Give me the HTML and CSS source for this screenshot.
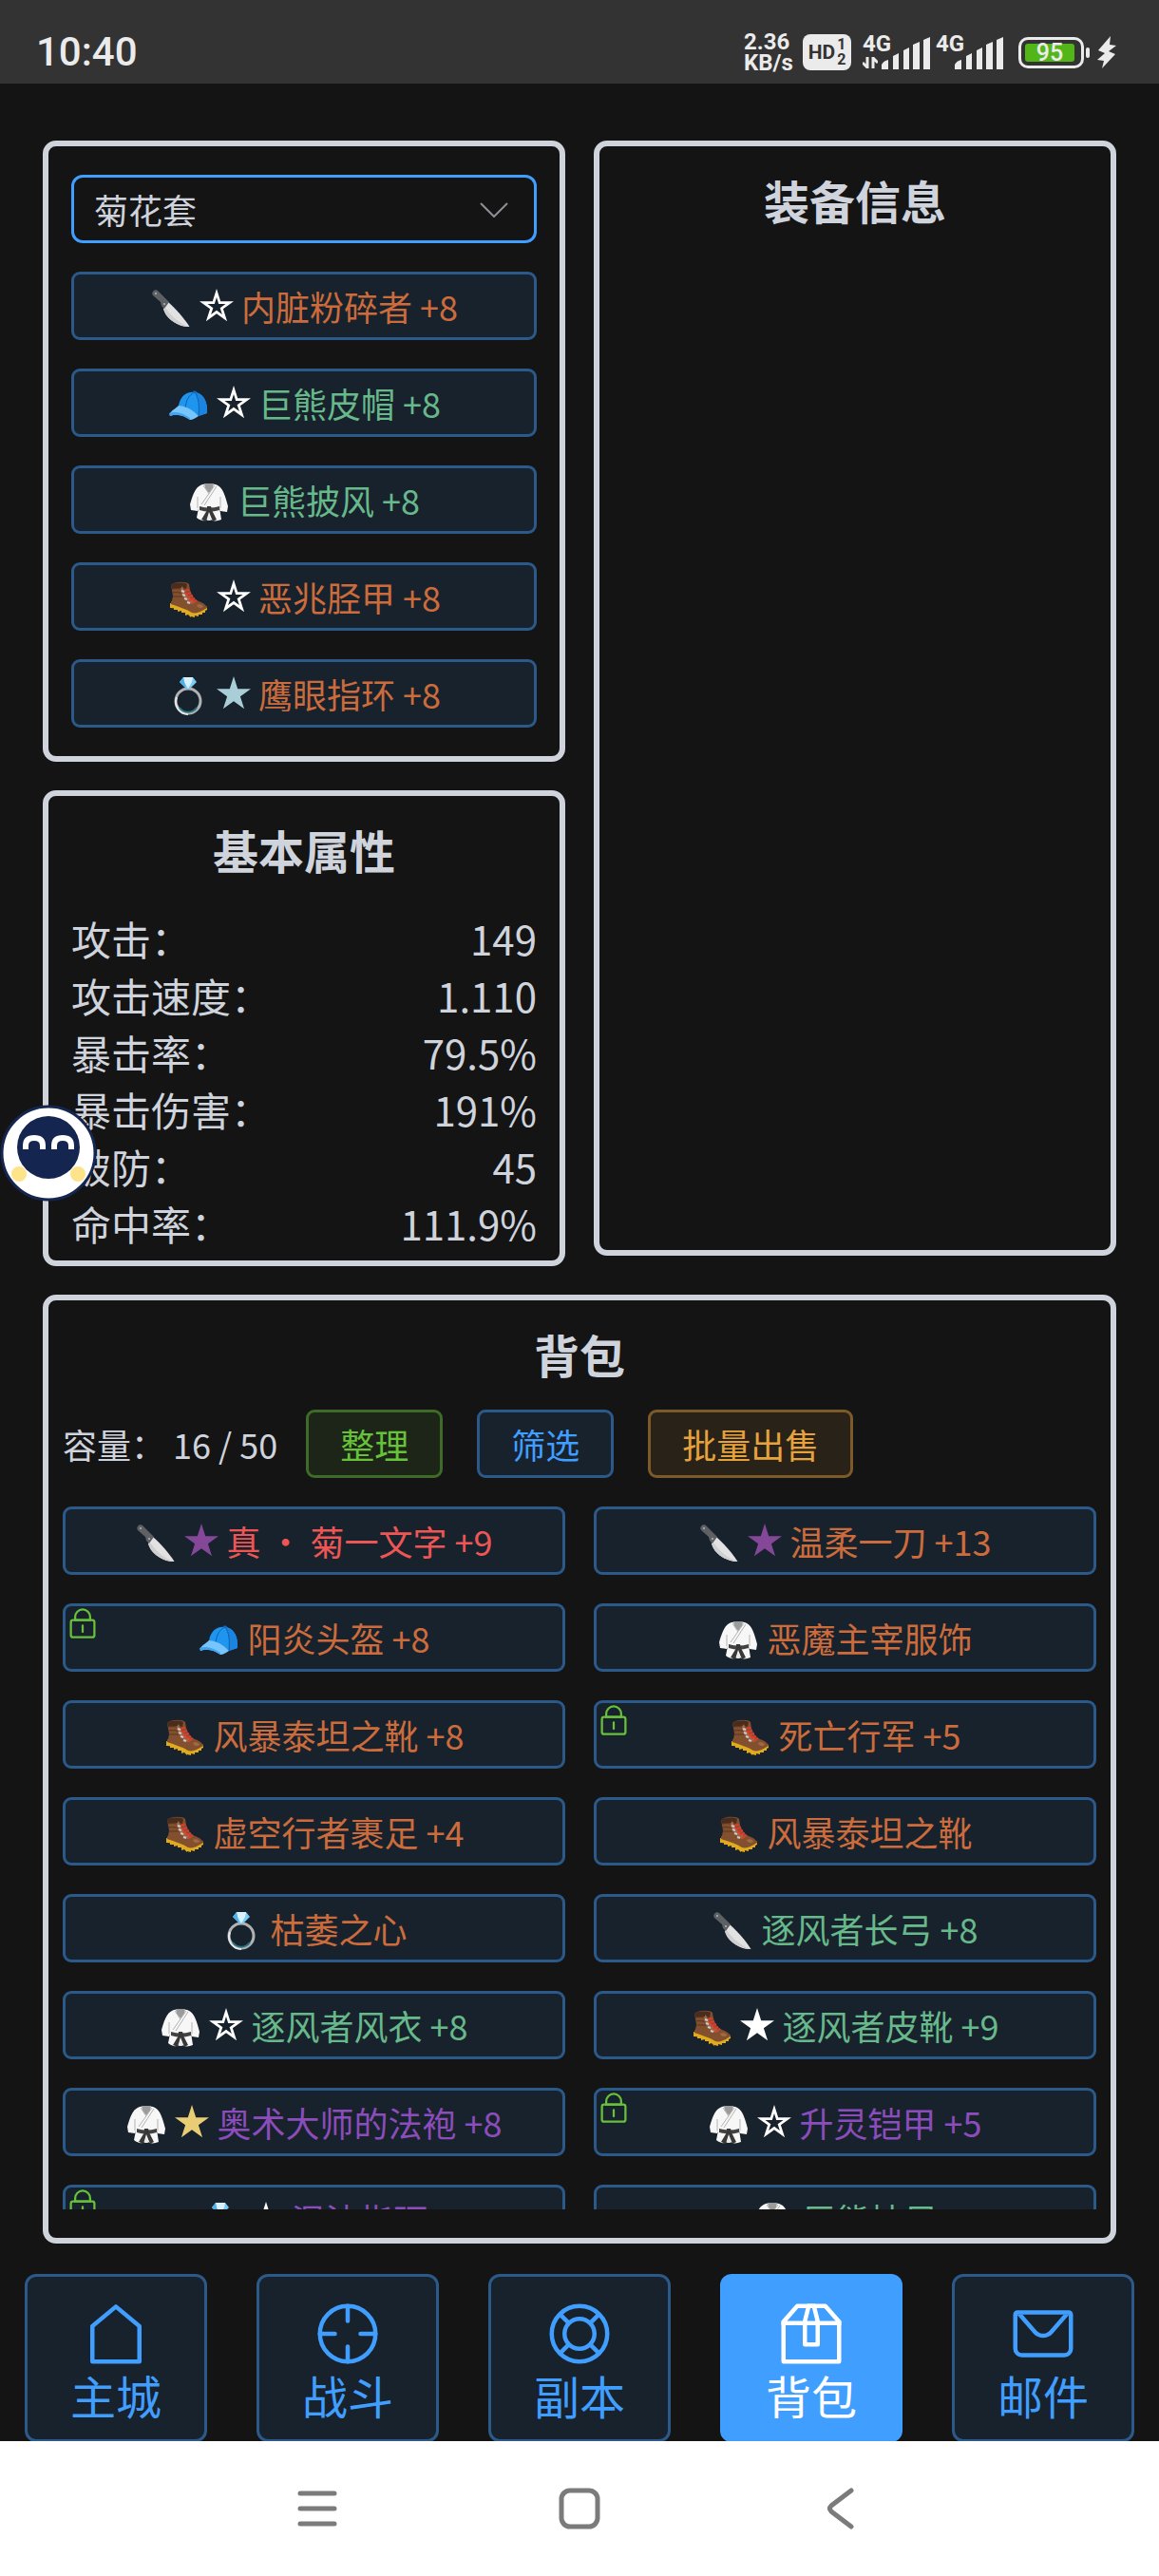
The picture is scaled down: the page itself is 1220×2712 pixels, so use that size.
FILE: index.html
```html
<!DOCTYPE html>
<html lang="zh-CN">
<head>
    <meta charset="utf-8">
    <meta name="viewport" content="width=device-width">
    <title>背包</title>
    <link rel="stylesheet" href="styles.css">
</head>
<body>
    <!-- shared icons -->
    <svg class="sprite" aria-hidden="true">
        <symbol id="knife" viewBox="0 0 40 40">
            <path d="M12 20 L17 13 C25 20 34 30 39.500 39 C31 40 17 33 13 23 Z" fill="#e2e2e2"/>
            <path d="M12 20 L15 20 C20 28 30 36 39 39 C29 39 17 32 13 23 Z" fill="#cfcfcf"/>
            <path d="M1 2 C2 0 5 0 6 1 L18 13 L13 20 L10 17 L9 13 L1 6 C0 5 0 3 1 2 Z" fill="#5d6164"/>
            <circle cx="4" cy="4" r="1" fill="#b5b8ba"/>
            <circle cx="13" cy="15" r="1" fill="#b5b8ba"/>
        </symbol>
        <symbol id="cap" viewBox="0 0 40 40">
            <path d="M10 20 C12 9 20 5 27 6 C36 7 41 16 40 28 L31 31 C24 24 17 22 10 20 Z" fill="#1e96f0"/>
            <path d="M27 6 C36 7 41 16 40 28 L31 31 C32 20 31 11 27 6 Z" fill="#1a84e0"/>
            <path d="M27 6 C20 9 18 15 17 23 M27 6 C31 11 32 20 31 31" fill="none" stroke="#0b60b0" stroke-width="1"/>
            <path d="M10 20 C17 20 26 25 31 31 C28 33 25 35 22 35 C16 31 9 28 1 31 C-1 27 6 24 10 20 Z" fill="#78c5fb"/>
            <path d="M0 28 C9 25 17 30 22 33 L22 35 C16 31 9 28 1 31 Z" fill="#3fa4f2"/>
            <path d="M25 5 C27 4 29 5 29 6 L26 7 Z" fill="#0f6cc0"/>
        </symbol>
        <symbol id="gi" viewBox="0 0 40 40">
            <path d="M13 1 C17 0 23 0 27 1 C33 3 36 8 40 24 L39 30 L32 29 L31 25 L33 38 C28 40 24 40 20 37 C16 40 12 40 7 36 L9 26 L8 29 L1 28 L0 22 C4 8 7 3 13 1 Z" fill="#f7f7f7"/>
            <path d="M15 0 H25 L24 5 L20 10 L16 5 Z" fill="#9b9b9b"/>
            <path d="M8 14 V26 M32 14 V26 M14 2 L20 11 M26 2 L12 22 M28 3 L15 23" fill="none" stroke="#b3b3b3" stroke-width="1"/>
            <path d="M10 24 C17 26 24 26 31 24 V28 C24 30 17 30 10 28 Z" fill="#424242"/>
            <path d="M18 24 H22 L23 28 L28 38 L24 40 L20 30 L17 40 L12 38 L18 28 Z" fill="#383838"/>
            <path d="M20 32 L22 39 H18 Z" fill="#e8e8e8"/>
        </symbol>
        <symbol id="boot" viewBox="0 0 40 40">
            <path d="M2 5 C6 1 18 1 21 4 C22 12 24 18 31 22 C37 24 40 27 40 30 L30 36 L2 29 C2 23 4 19 4 16 Z" fill="#83502f"/>
            <path d="M2 5 C5 2 15 2 19 4 L18 9 C12 7 6 9 3 9 Z" fill="#4a2c1c"/>
            <path d="M3 9 C8 8 13 9 17 10 M3 13 C8 12 12 13 15 14 M4 17 L14 17" fill="none" stroke="#5a3420" stroke-width="1"/>
            <path d="M14 6 C16 13 21 19 28 23 L24 25 C17 22 13 15 12 9 Z" fill="#a26a43"/>
            <path d="M16 11 L21 10 M17 15 L23 13 M19 18 L25 16 M21 21 L27 19 M24 24 L29 21" stroke="#e03a30" stroke-width="2"/>
            <path d="M13 11 L16 12 M14 15 L17 16 M16 19 L19 20 M19 23 L22 24" stroke="#c8ccd0" stroke-width="2"/>
            <path d="M1 24 C10 27 18 29 24 33 C30 35 36 30 40 28 L40 31 L38 32 V34 L35 34 V36 L31 36 V38 L27 37 V39 L23 38 V39 L20 36 L17 37 V34 L13 34 V32 L9 33 V31 L5 31 V29 L1 29 Z" fill="#e0ab1c"/>
            <path d="M2 22 C10 24 18 26 24 30 C30 32 36 28 40 27 L40 29 C36 31 30 36 24 34 C18 30 10 28 2 25 Z" fill="#83502f"/>
            <path d="M29 26 C32 24 36 26 36 28 C33 30 30 29 29 26 Z" fill="#a26a43"/>
        </symbol>
        <symbol id="ring" viewBox="0 0 40 40">
            <circle cx="20" cy="25" r="13" fill="none" stroke="#aeb2b5" stroke-width="3"/>
            <path d="M8 21 A13 13 0 0 0 20 39" fill="none" stroke="#e4e7e9" stroke-width="2"/>
            <path d="M11 32 A11 11 0 0 0 29 32" fill="none" stroke="#2d7280" stroke-width="2"/>
            <path d="M15 0 H25 L29 5 L22 12 H18 L11 5 Z" fill="#7ccbf5"/>
            <path d="M15 0 H25 L24 5 H16 Z M16 5 L20 12 L24 5 Z" fill="#d8f3ff"/>
            <path d="M11 5 L15 0 L16 5 L18 12 Z" fill="#4fb0ea"/>
        </symbol>
        <symbol id="star" viewBox="0 0 36 36">
            <path d="M18 0 L22.200 13.200 H36 L24.900 21.200 L29.100 34.300 L18 26.200 L6.900 34.300 L11.100 21.200 L0 13.200 H13.800 Z" fill="currentColor"/>
        </symbol>
        <symbol id="star-o" viewBox="0 0 36 36">
            <path fill-rule="evenodd" d="M18 0 L22.200 13.200 H36 L24.900 21.200 L29.100 34.300 L18 26.200 L6.900 34.300 L11.100 21.200 L0 13.200 H13.800 Z M18 9 L15.800 15.900 H8.500 L14.400 20.200 L12.100 27.100 L18 22.800 L23.900 27.100 L21.600 20.200 L27.500 15.900 H20.200 Z" fill="currentColor"/>
        </symbol>
        <symbol id="lock" viewBox="0 0 1024 1024">
            <path fill="currentColor" d="M224 448a32 32 0 0 0-32 32v384a32 32 0 0 0 32 32h576a32 32 0 0 0 32-32V480a32 32 0 0 0-32-32H224zm0-64h576a96 96 0 0 1 96 96v384a96 96 0 0 1-96 96H224a96 96 0 0 1-96-96V480a96 96 0 0 1 96-96z"/>
            <path fill="currentColor" d="M512 544a32 32 0 0 1 32 32v192a32 32 0 1 1-64 0V576a32 32 0 0 1 32-32zm192-160v-64a192 192 0 1 0-384 0v64h384zM512 64a256 256 0 0 1 256 256v128H256V320A256 256 0 0 1 512 64z"/>
        </symbol>
        <symbol id="bars" viewBox="0 0 52 34">
            <path fill="#ebebeb" d="M0 34 V29 Q2 25 7 24 V34 Z M12 34 V20 L18 17 V34 Z M23 34 V14 L29 11 V34 Z M33 34 V8 L40 5 V34 Z M44 34 V3 L51 0 V34 Z"/>
        </symbol>
    </svg>

    <header class="status-bar">
        <span class="clock">10:40</span>
        <div class="status-icons">
            <span class="speed">2.36<br>KB/s</span>
            <span class="hd">HD<span class="hd-num">1<br>2</span></span>
            <span class="signal">
                <span class="net">4G</span>
                <svg class="arrows" viewBox="0 0 16 12"><path d="M5 0 V11 L0 6 M11 12 V1 L16 6" fill="none" stroke="#ebebeb" stroke-width="3"/></svg>
                <svg class="bars"><use href="#bars"/></svg>
            </span>
            <span class="signal second">
                <span class="net">4G</span>
                <svg class="bars"><use href="#bars"/></svg>
            </span>
            <span class="battery"><span class="level">95</span></span>
            <svg class="bolt" viewBox="0 0 20 34"><path d="M14 0 L1 15 L8 18 L0 25 L7 26 L5 34 L19 19 L12 16 L20 10 L13 9 Z" fill="#ebebeb"/></svg>
        </div>
    </header>

    <main class="content">
        <div class="top">
            <div class="left">
                <section class="panel equip">
                    <div class="select">
                        <select aria-label="套装">
                            <option>菊花套</option>
                        </select>
                        <svg viewBox="0 0 30 16"><path d="M1 1 L15 15 L29 1" fill="none" stroke="#8d9095" stroke-width="2"/></svg>
                    </div>
                    <button class="item orange"><svg class="emoji"><use href="#knife"/></svg><svg class="star white"><use href="#star-o"/></svg><span>内脏粉碎者 +8</span></button>
                    <button class="item green"><svg class="emoji"><use href="#cap"/></svg><svg class="star white"><use href="#star-o"/></svg><span>巨熊皮帽 +8</span></button>
                    <button class="item green"><svg class="emoji"><use href="#gi"/></svg><span>巨熊披风 +8</span></button>
                    <button class="item orange"><svg class="emoji"><use href="#boot"/></svg><svg class="star white"><use href="#star-o"/></svg><span>恶兆胫甲 +8</span></button>
                    <button class="item orange"><svg class="emoji"><use href="#ring"/></svg><svg class="star ice"><use href="#star"/></svg><span>鹰眼指环 +8</span></button>
                </section>

                <section class="panel stats">
                    <h3>基本属性</h3>
                    <dl>
                        <div><dt>攻击：</dt><dd>149</dd></div>
                        <div><dt>攻击速度：</dt><dd>1.110</dd></div>
                        <div><dt>暴击率：</dt><dd>79.5%</dd></div>
                        <div><dt>暴击伤害：</dt><dd>191%</dd></div>
                        <div><dt>破防：</dt><dd>45</dd></div>
                        <div><dt>命中率：</dt><dd>111.9%</dd></div>
                    </dl>
                    <!-- floating helper -->
                    <button class="helper" aria-label="助手">
                        <svg viewBox="0 0 102 102">
                            <circle cx="51" cy="51" r="49" fill="#fff" stroke="#14264f" stroke-width="3"/>
                            <circle cx="51" cy="45" r="33" fill="#14264f"/>
                            <path d="M27 47 V43 Q27 35 36 35 Q45 35 45 43 V47 M57 47 V43 Q57 35 66 35 Q75 35 75 43 V47" fill="none" stroke="#fff" stroke-width="6"/>
                            <circle cx="20" cy="73" r="8" fill="#fde38a"/>
                            <circle cx="82" cy="73" r="8" fill="#fde38a"/>
                        </svg>
                    </button>
                </section>
            </div>

            <section class="panel info">
                <h3>装备信息</h3>
            </section>
        </div>

        <section class="panel bag">
            <h3>背包</h3>
            <div class="tools">
                <span class="capacity">容量： 16 / 50</span>
                <button class="tool success">整理</button>
                <button class="tool primary">筛选</button>
                <button class="tool warning">批量出售</button>
            </div>
            <div class="bag-list">
                <button class="item red"><svg class="emoji"><use href="#knife"/></svg><svg class="star violet"><use href="#star"/></svg><span>真 ・ 菊一文字 +9</span></button>
                <button class="item orange"><svg class="emoji"><use href="#knife"/></svg><svg class="star violet"><use href="#star"/></svg><span>温柔一刀 +13</span></button>
                <button class="item orange"><svg class="lock"><use href="#lock"/></svg><svg class="emoji"><use href="#cap"/></svg><span>阳炎头盔 +8</span></button>
                <button class="item orange"><svg class="emoji"><use href="#gi"/></svg><span>恶魔主宰服饰</span></button>
                <button class="item orange"><svg class="emoji"><use href="#boot"/></svg><span>风暴泰坦之靴 +8</span></button>
                <button class="item orange"><svg class="lock"><use href="#lock"/></svg><svg class="emoji"><use href="#boot"/></svg><span>死亡行军 +5</span></button>
                <button class="item orange"><svg class="emoji"><use href="#boot"/></svg><span>虚空行者裹足 +4</span></button>
                <button class="item orange"><svg class="emoji"><use href="#boot"/></svg><span>风暴泰坦之靴</span></button>
                <button class="item orange"><svg class="emoji"><use href="#ring"/></svg><span>枯萎之心</span></button>
                <button class="item green"><svg class="emoji"><use href="#knife"/></svg><span>逐风者长弓 +8</span></button>
                <button class="item green"><svg class="emoji"><use href="#gi"/></svg><svg class="star white"><use href="#star-o"/></svg><span>逐风者风衣 +8</span></button>
                <button class="item green"><svg class="emoji"><use href="#boot"/></svg><svg class="star white"><use href="#star"/></svg><span>逐风者皮靴 +9</span></button>
                <button class="item purple"><svg class="emoji"><use href="#gi"/></svg><svg class="star gold"><use href="#star"/></svg><span>奥术大师的法袍 +8</span></button>
                <button class="item purple"><svg class="lock"><use href="#lock"/></svg><svg class="emoji"><use href="#gi"/></svg><svg class="star white"><use href="#star-o"/></svg><span>升灵铠甲 +5</span></button>
                <button class="item purple"><svg class="lock"><use href="#lock"/></svg><svg class="emoji"><use href="#ring"/></svg><svg class="star white"><use href="#star-o"/></svg><span>混沌指环</span></button>
                <button class="item green"><svg class="emoji"><use href="#gi"/></svg><span>巨熊披风</span></button>
            </div>
        </section>
    </main>

    <nav class="tabs">
        <button class="tab">
            <svg viewBox="0 0 1024 1024"><path fill="currentColor" d="M192 413.952V896h640V413.952L512 147.328 192 413.952zM139.520 374.400l352-293.312a32 32 0 0 1 40.960 0l352 293.312A32 32 0 0 1 896 398.976V928a32 32 0 0 1-32 32H160a32 32 0 0 1-32-32V398.976a32 32 0 0 1 11.520-24.576z"/></svg>
            <span>主城</span>
        </button>
        <button class="tab">
            <svg viewBox="0 0 1024 1024"><g fill="none" stroke="currentColor" stroke-width="64" stroke-linecap="round"><circle cx="512" cy="512" r="416"/><path d="M512 96V320M512 704V928M96 512H320M704 512H928"/></g></svg>
            <span>战斗</span>
        </button>
        <button class="tab">
            <svg viewBox="0 0 1024 1024"><g fill="none" stroke="currentColor" stroke-width="64"><circle cx="512" cy="512" r="416"/><circle cx="512" cy="512" r="224"/><path d="M218 218L354 354M806 218L670 354M218 806L354 670M806 806L670 670"/></g></svg>
            <span>副本</span>
        </button>
        <button class="tab active">
            <svg viewBox="0 0 1024 1024"><path fill="currentColor" d="M317.056 128 128 344.064V896h768V344.064L706.944 128H317.056zm-14.528-64h418.944a32 32 0 0 1 24.064 10.880l206.528 236.096A32 32 0 0 1 960 332.032V928a32 32 0 0 1-32 32H96a32 32 0 0 1-32-32V332.032a32 32 0 0 1 7.936-21.120L278.400 75.008A32 32 0 0 1 302.528 64z"/><path fill="currentColor" d="M64 320h896v64H64z"/><path fill="currentColor" d="M448 327.872V640h128V327.872L526.080 128h-28.160L448 327.872zM448 64h128l64 256v352a32 32 0 0 1-32 32H416a32 32 0 0 1-32-32V320l64-256z"/></svg>
            <span>背包</span>
        </button>
        <button class="tab">
            <svg viewBox="0 0 1024 1024"><path fill="currentColor" d="M128 224v512a64 64 0 0 0 64 64h640a64 64 0 0 0 64-64V224H128zm0-64h768a64 64 0 0 1 64 64v512a128 128 0 0 1-128 128H192A128 128 0 0 1 64 736V224a64 64 0 0 1 64-64z"/><path fill="currentColor" d="M904 224 656.512 506.880a192 192 0 0 1-289.024 0L120 224h784zm-698.944 0 210.560 240.704a128 128 0 0 0 192.704 0L818.944 224H205.056z"/></svg>
            <span>邮件</span>
        </button>
    </nav>

    <footer class="system-bar">
        <button aria-label="最近任务"><svg viewBox="0 0 44 44"><path d="M4 6 H40 M4 22 H40 M4 38 H40" stroke="#7b7b7b" stroke-width="5" stroke-linecap="round"/></svg></button>
        <button aria-label="主屏幕"><svg viewBox="0 0 44 44"><rect x="3" y="3" width="38" height="38" rx="9" fill="none" stroke="#7b7b7b" stroke-width="5"/></svg></button>
        <button aria-label="返回"><svg viewBox="0 0 44 44"><path d="M32 3 L11 19 Q8 22 11 25 L32 41" fill="none" stroke="#7b7b7b" stroke-width="5" stroke-linecap="round"/></svg></button>
    </footer>
</body>
</html>
```

FILE: styles.css
```css
* {
    box-sizing: border-box;
}

body {
    margin: 0;
    height: 100vh;
    display: flex;
    flex-direction: column;
    background-color: #141414;
    color: #cfd3dc;
    font-family: "Noto Sans CJK SC", "Noto Sans", sans-serif;
    font-size: 36px;
}

button, select {
    margin: 0;
    padding: 0;
    font: inherit;
    color: inherit;
    background: none;
    border: none;
}

.sprite {
    position: absolute;
    width: 0;
    height: 0;
}

/* phone status bar */
.status-bar {
    flex: none;
    height: 88px;
    padding: 22px 45px 0 38px;
    display: flex;
    justify-content: space-between;
    background-color: #333;
    color: #ebebeb;
    font-family: Roboto, sans-serif;
}

.clock {
    font-size: 42px;
    line-height: 66px;
    font-weight: 500;
}

.status-icons {
    display: flex;
    align-items: center;
    height: 66px;
    font-weight: 700;
}

.speed {
    width: 54px;
    margin-right: 8px;
    font-size: 24px;
    line-height: 22px;
    white-space: nowrap;
}

.hd {
    display: flex;
    align-items: center;
    justify-content: center;
    gap: 2px;
    width: 51px;
    height: 38px;
    margin-right: 12px;
    border-radius: 8px;
    background-color: #ebebeb;
    color: #333;
    font-size: 21px;
}

.hd-num {
    font-size: 16px;
    line-height: 16px;
}

.signal {
    position: relative;
    width: 72px;
    height: 36px;
    margin-right: 5px;
    font-size: 24px;
    line-height: 18px;
}

.net {
    position: absolute;
    left: 0;
    top: 0;
}

.arrows {
    position: absolute;
    left: 0;
    bottom: 1px;
    width: 16px;
    height: 12px;
}

.bars {
    position: absolute;
    right: 0;
    bottom: 0;
    width: 52px;
    height: 34px;
}

.second {
    margin-right: 15px;
}

.battery {
    position: relative;
    width: 69px;
    height: 33px;
    padding: 4px;
    margin-right: 14px;
    border: 3px solid #ebebeb;
    border-radius: 10px;
}

.battery::after {
    content: "";
    position: absolute;
    right: -9px;
    top: 8px;
    width: 4px;
    height: 11px;
    border-radius: 2px;
    background-color: #ebebeb;
}

.level {
    display: block;
    width: 52px;
    height: 19px;
    border-radius: 3px;
    background-color: #52b518;
    font-size: 25px;
    font-weight: 500;
    line-height: 20px;
    text-align: center;
}

.bolt {
    width: 20px;
    height: 34px;
}

/* panels */
.content {
    flex: 1;
    min-height: 0;
    padding: 60px 45px 0;
    display: flex;
    flex-direction: column;
    gap: 30px;
}

.top {
    flex: none;
    display: grid;
    grid-template-columns: 1fr 1fr;
    gap: 30px;
}

.left {
    display: flex;
    flex-direction: column;
    gap: 30px;
}

.panel {
    position: relative;
    border: 6px solid #cfd3dc;
    border-radius: 14px;
    padding: 30px 24px;
}

.panel h3 {
    margin: 0;
    font-size: 48px;
    line-height: 52px;
    text-align: center;
}

.equip {
    display: flex;
    flex-direction: column;
    gap: 30px;
}

.info {
    margin-bottom: 11px;
}

.select {
    position: relative;
}

.select select {
    display: block;
    width: 100%;
    height: 72px;
    padding: 0 21px;
    border: 3px solid #409eff;
    border-radius: 12px;
    appearance: none;
}

.select svg {
    position: absolute;
    right: 30px;
    top: 29px;
    width: 30px;
    height: 16px;
    pointer-events: none;
}

/* equipment buttons */
.item {
    position: relative;
    display: flex;
    align-items: center;
    justify-content: center;
    gap: 8px;
    height: 72px;
    border: 3px solid #2a598a;
    border-radius: 9px;
    background-color: #18222c;
    line-height: 48px;
    white-space: nowrap;
}

.emoji {
    flex: none;
    width: 40px;
    height: 40px;
    margin: 6px 2px 0;
}

.star {
    flex: none;
    width: 36px;
    height: 36px;
}

.lock {
    position: absolute;
    left: 0;
    top: 0;
    width: 36px;
    height: 36px;
    color: #67c23a;
}

.orange { color: #cc6c3c; }
.green { color: #67b98b; }
.purple { color: #8b4dbb; }
.red { color: #ee5656; }

.white { color: #fff; }
.ice { color: #a9ced8; }
.violet { color: #854798; }
.gold { color: #e9cd74; }

/* stats */
.stats {
    padding-bottom: 9px;
}

.stats dl {
    margin: 38px 0 0;
    font-size: 42px;
    line-height: 60px;
}

.stats dl div {
    display: flex;
    justify-content: space-between;
}

.stats dd {
    margin: 0;
}

.helper {
    position: absolute;
    left: -51px;
    top: 325px;
    width: 102px;
    height: 102px;
}

.helper svg {
    display: block;
}

/* bag */
.bag {
    flex: 1;
    min-height: 0;
    padding: 30px 15px;
    display: flex;
    flex-direction: column;
}

.tools {
    display: flex;
    align-items: center;
    margin: 33px 0 30px;
}

.capacity {
    margin-right: 30px;
}

.tool {
    height: 72px;
    padding: 0 33px;
    margin-right: 36px;
    border: 3px solid;
    border-radius: 9px;
}

.success {
    color: #67c23a;
    background-color: #1c2518;
    border-color: #3e6b27;
}

.primary {
    color: #409eff;
    background-color: #18222c;
    border-color: #2a598a;
}

.warning {
    color: #e6a23c;
    background-color: #292218;
    border-color: #7d5b28;
}

.bag-list {
    flex: 1;
    min-height: 0;
    overflow: hidden;
    display: grid;
    grid-template-columns: 1fr 1fr;
    grid-auto-rows: 72px;
    gap: 30px;
}

/* bottom tabs */
.tabs {
    flex: none;
    height: 208px;
    padding-top: 32px;
    display: flex;
    justify-content: space-around;
    overflow: hidden;
}

.tab {
    width: 192px;
    height: 177px;
    padding-top: 24px;
    display: flex;
    flex-direction: column;
    align-items: center;
    border: 3px solid #2a598a;
    border-radius: 12px;
    background-color: #18222c;
    color: #409eff;
    font-size: 48px;
    line-height: 56px;
}

.tab svg {
    width: 72px;
    height: 72px;
}

.active {
    background-color: #409eff;
    border-color: #409eff;
    color: #fff;
}

.system-bar {
    flex: none;
    height: 142px;
    padding: 0 196px;
    display: flex;
    align-items: center;
    background-color: #fff;
}

.system-bar button {
    flex: 1;
}

.system-bar svg {
    display: block;
    width: 44px;
    height: 44px;
    margin: 0 auto;
}
```
